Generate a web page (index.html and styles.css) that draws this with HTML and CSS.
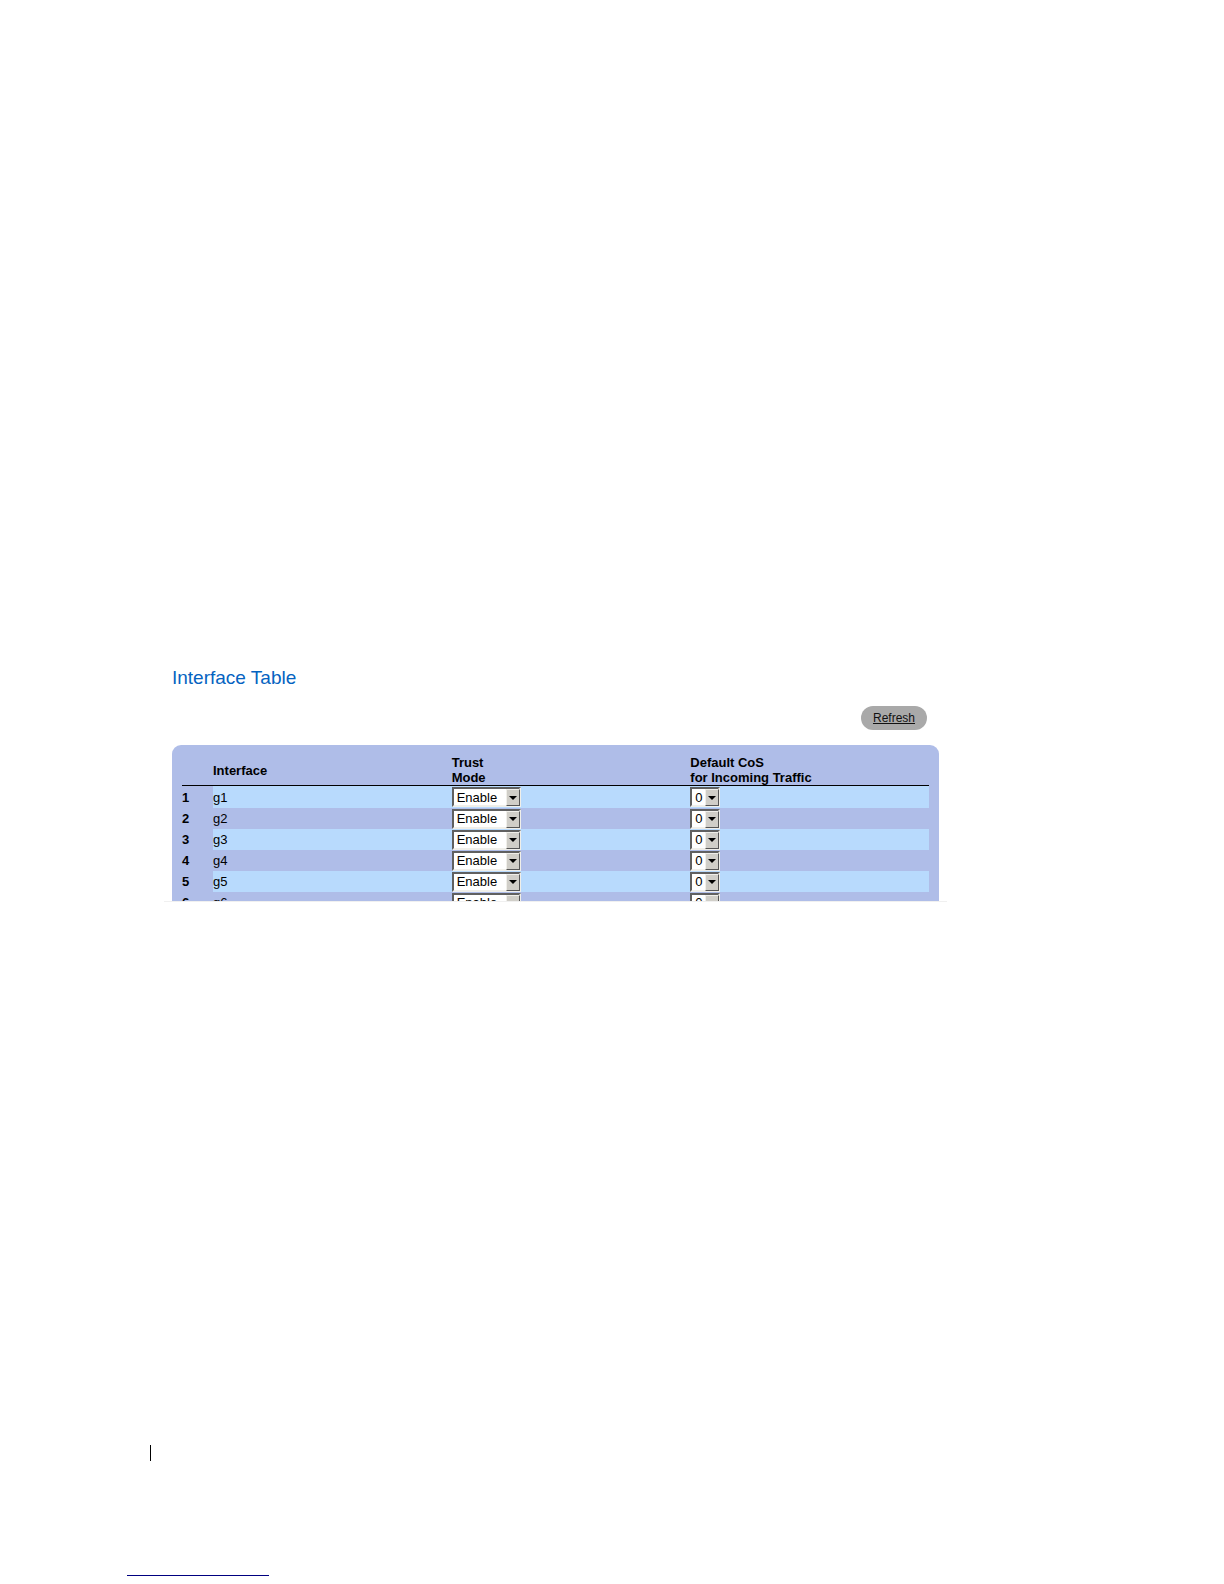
FILE: index.html
```html
<!DOCTYPE html>
<html lang="en">
<head>
<meta charset="UTF-8">
<meta name="viewport" content="width=device-width, initial-scale=1.0">
<title>Interface Table</title>
<link rel="stylesheet" href="styles.css">
</head>
<body>
  <main class="content">
    <h1>Interface Table</h1>
    <div class="toolbar">
      <button type="button" class="refresh">Refresh</button>
    </div>

    <div class="table-frame">
      <div class="panel">
        <table class="interfaces">
          <colgroup>
            <col class="col-num">
            <col>
            <col>
            <col>
          </colgroup>
          <thead>
            <tr>
              <th></th>
              <th scope="col">Interface</th>
              <th scope="col">Trust<br>Mode</th>
              <th scope="col">Default CoS<br>for Incoming Traffic</th>
            </tr>
          </thead>
          <tbody>
            <tr>
              <th scope="row">1</th>
              <td>g1</td>
              <td><span class="drop"><select class="mode" aria-label="Trust mode g1"><option>Enable</option><option>Disable</option></select><span class="arrow"></span></span></td>
              <td><span class="drop"><select class="cos" aria-label="Default CoS g1"><option>0</option><option>1</option></select><span class="arrow"></span></span></td>
            </tr>
            <tr>
              <th scope="row">2</th>
              <td>g2</td>
              <td><span class="drop"><select class="mode" aria-label="Trust mode g2"><option>Enable</option><option>Disable</option></select><span class="arrow"></span></span></td>
              <td><span class="drop"><select class="cos" aria-label="Default CoS g2"><option>0</option><option>1</option></select><span class="arrow"></span></span></td>
            </tr>
            <tr>
              <th scope="row">3</th>
              <td>g3</td>
              <td><span class="drop"><select class="mode" aria-label="Trust mode g3"><option>Enable</option><option>Disable</option></select><span class="arrow"></span></span></td>
              <td><span class="drop"><select class="cos" aria-label="Default CoS g3"><option>0</option><option>1</option></select><span class="arrow"></span></span></td>
            </tr>
            <tr>
              <th scope="row">4</th>
              <td>g4</td>
              <td><span class="drop"><select class="mode" aria-label="Trust mode g4"><option>Enable</option><option>Disable</option></select><span class="arrow"></span></span></td>
              <td><span class="drop"><select class="cos" aria-label="Default CoS g4"><option>0</option><option>1</option></select><span class="arrow"></span></span></td>
            </tr>
            <tr>
              <th scope="row">5</th>
              <td>g5</td>
              <td><span class="drop"><select class="mode" aria-label="Trust mode g5"><option>Enable</option><option>Disable</option></select><span class="arrow"></span></span></td>
              <td><span class="drop"><select class="cos" aria-label="Default CoS g5"><option>0</option><option>1</option></select><span class="arrow"></span></span></td>
            </tr>
            <tr>
              <th scope="row">6</th>
              <td>g6</td>
              <td><span class="drop"><select class="mode" aria-label="Trust mode g6"><option>Enable</option><option>Disable</option></select><span class="arrow"></span></span></td>
              <td><span class="drop"><select class="cos" aria-label="Default CoS g6"><option>0</option><option>1</option></select><span class="arrow"></span></span></td>
            </tr>
          </tbody>
        </table>
      </div>
    </div>
  </main>

  <footer class="footer">
    <div class="folio-bar"></div>
    <div class="link-line"></div>
  </footer>
</body>
</html>
```
FILE: styles.css
```css
* {
  box-sizing: border-box;
}

body {
  margin: 0;
  min-height: 100vh;
  display: flex;
  flex-direction: column;
  background-color: #fff;
  color: #000;
  font-family: "Liberation Sans", Arial, sans-serif;
  font-size: 13px;
}

.content {
  padding: 667px 285px 0 172px;
}

h1 {
  margin: 0;
  font-size: 19px;
  line-height: 21px;
  font-weight: normal;
  color: #0563c1;
}

.toolbar {
  display: flex;
  justify-content: flex-end;
  padding: 18px 12px 15px;
}

.refresh {
  width: 66px;
  height: 24px;
  padding: 0;
  border: none;
  border-radius: 12px;
  background-color: #a9a9a9;
  color: #111;
  font-family: inherit;
  font-size: 12px;
  text-decoration: underline;
  cursor: pointer;
}

/* thin rule under the visible part of the table */
.table-frame {
  margin: 0 -8px;
  padding: 0 8px;
  border-bottom: 1px solid #f0f0f0;
}

.panel {
  max-height: 156px;
  overflow: hidden;
  padding: 10px 10px 0;
  border-radius: 9px 9px 0 0;
  background-color: #afbde8;
}

.interfaces {
  width: 100%;
  table-layout: fixed;
  border-collapse: separate;
  border-spacing: 0;
}

.col-num {
  width: 31px;
}

th,
td {
  padding: 0;
  text-align: left;
  vertical-align: middle;
}

thead th {
  line-height: 15px;
  border-bottom: 1px solid #000;
}

tbody th,
tbody td {
  height: 21px;
  line-height: 21px;
}

tbody tr:first-child > * {
  height: 22px;
}

tbody tr:nth-child(odd) td {
  background-color: #b8dafd;
}

.drop {
  position: relative;
  display: block;
  width: fit-content;
}

select {
  appearance: none;
  display: block;
  height: 20px;
  margin: 0;
  padding: 0 0 0 3px;
  border: 2px solid;
  border-color: #606060 #f0efea #f0efea #606060;
  border-radius: 0;
  background-color: #fff;
  color: #000;
  font-family: inherit;
  font-size: 13px;
}

.mode {
  width: 69px;
}

.cos {
  width: 30px;
}

.arrow {
  position: absolute;
  top: 2px;
  right: 1px;
  bottom: 1px;
  width: 14px;
  display: flex;
  align-items: center;
  justify-content: center;
  border: 1px solid;
  border-color: #f0efea #555 #555 #f0efea;
  background-color: #d0cec8;
  pointer-events: none;
}

.arrow::before {
  content: "";
  border: 4px solid transparent;
  border-top-color: #000;
  border-bottom: none;
}

.footer {
  margin-top: auto;
  padding: 0 0 8px 127px;
}

.folio-bar {
  width: 1px;
  height: 16px;
  margin: 0 0 114px 23px;
  background-color: #000;
}

.link-line {
  width: 142px;
  height: 1px;
  background-color: #000080;
}
```
